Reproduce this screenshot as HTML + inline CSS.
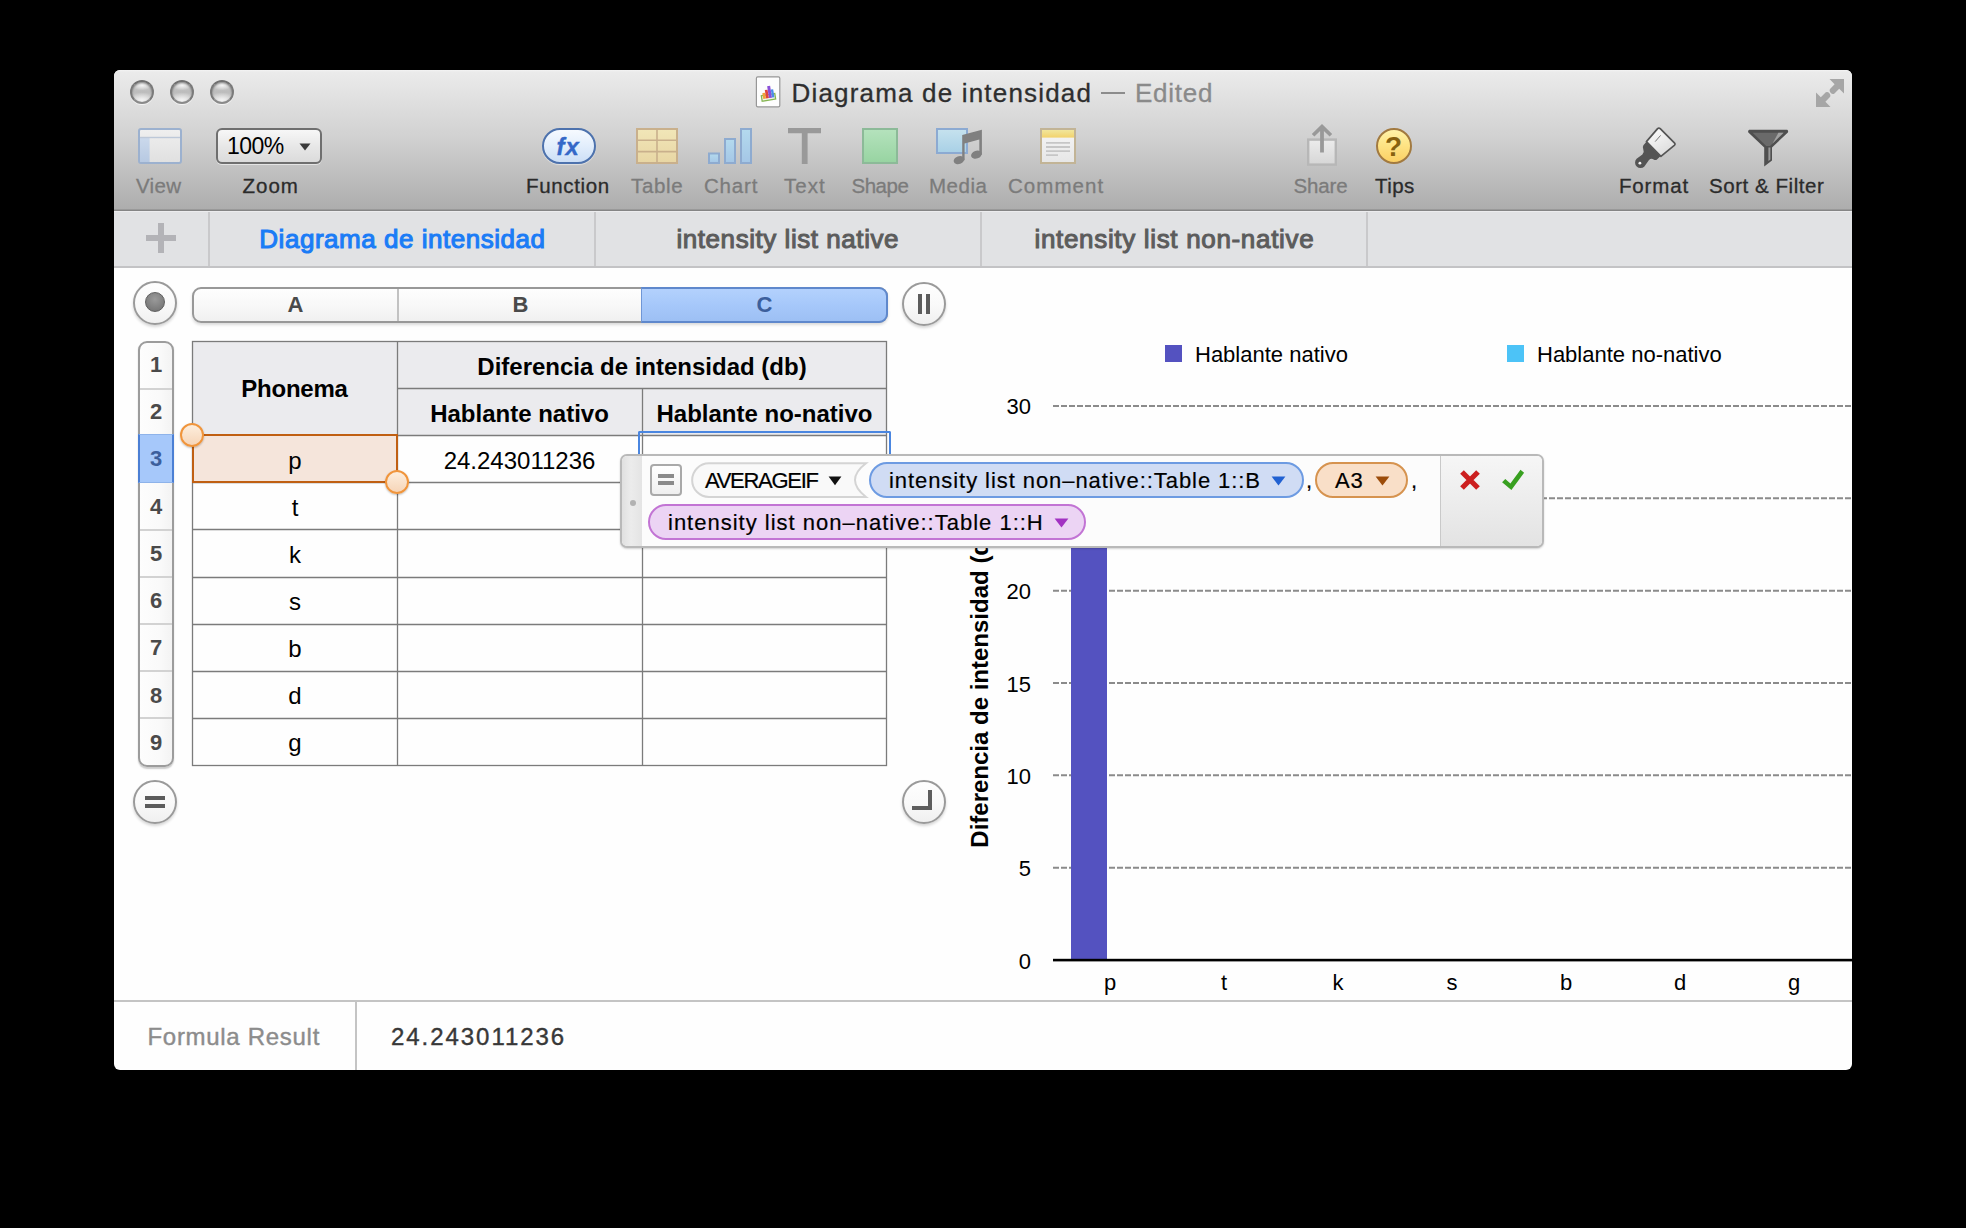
<!DOCTYPE html>
<html>
<head>
<meta charset="utf-8">
<title>Diagrama de intensidad</title>
<style>
*{box-sizing:border-box;margin:0;padding:0}
html,body{width:1966px;height:1228px;background:#000;overflow:hidden;font-family:"Liberation Sans",sans-serif}
body{font-family:"Liberation Sans",sans-serif;position:relative}
.win{position:absolute;left:114px;top:70px;width:1738px;height:1000px;border-radius:6px 6px 6px 6px;overflow:hidden;background:#fefefe}
.pg{position:absolute;left:-114px;top:-70px;width:1966px;height:1228px}
.a{position:absolute}
.t{position:absolute;white-space:nowrap;line-height:1}
.c{text-align:center}
/* toolbar */
.tb{left:114px;top:70px;width:1738px;height:141px;background:linear-gradient(#f4f4f4 0,#ebebeb 2px,#e3e3e3 22px,#d0d0d0 70px,#bcbcbc 110px,#adadad 139px,#858585 140px,#858585 141px)}
.tabs{left:114px;top:211px;width:1738px;height:57px;background:#e1e2e4;border-top:1px solid #ececee;border-bottom:2px solid #c3c3c5}
.tabsep{top:212px;width:2px;height:54px;background:#c9c9cb}
.tab{top:226px;font-size:26px;color:#5c5c5c;-webkit-text-stroke:1.05px #5c5c5c}
.lbl{top:176px;font-size:20.5px;color:#7b7b7b;letter-spacing:.3px;-webkit-text-stroke:.3px #7b7b7b}
.lbl.d{color:#2b2b2b;-webkit-text-stroke:.3px #2b2b2b}
.tl{width:24px;height:24px;border-radius:50%;background:radial-gradient(ellipse 62% 40% at 50% 92%,#f4f4f4 0,rgba(240,240,240,0) 100%),radial-gradient(ellipse 50% 26% at 50% 16%,#f6f6f6 0,rgba(246,246,246,0) 100%),linear-gradient(#cdcdcd,#bcbcbc 50%,#c9c9c9 75%,#dedede);border:2px solid #7a7a7a;border-top-color:#707070;border-bottom-color:#8a8a8a;box-shadow:0 1px 0.5px rgba(255,255,255,.7),inset 0 1px 2px rgba(0,0,0,.4)}
.cbtn{width:44px;height:44px;border-radius:50%;border:2px solid #9a9a9a;background:linear-gradient(#fefefe,#f9f9f9 55%,#f0f0f0);box-shadow:0 2px 3px rgba(0,0,0,.16)}
.colh{top:294px;font-size:22px;font-weight:bold;color:#4a4a4a}
.rowh{left:139px;width:34px;text-align:center;font-size:22px;font-weight:bold;color:#4a4a4a}
.rsep{left:0;width:32px;height:2px;background:#d2d2d2}
.th{font-size:24px;font-weight:bold;color:#000}
.td{font-size:24px;color:#000}
.hnd{width:24px;height:24px;border-radius:50%;border:2.4px solid #f0953c;background:linear-gradient(#fdeedd,#f6d5b8);box-shadow:0 1px 2px rgba(0,0,0,.25)}
.lg{top:344px;font-size:22px;color:#000}
.yl{left:980px;width:51px;text-align:right;font-size:22px;color:#000}
.xl{width:60px;text-align:center;top:972px;font-size:22px;color:#000}
.fm{font-size:22px;color:#000;letter-spacing:.8px;-webkit-text-stroke:.2px #000}
.botline{left:114px;top:1000px;width:1738px;height:2px;background:#c4c4c4}
</style>
</head>
<body>
<div class="win"><div class="pg">

<!-- TOOLBAR -->
<div class="a tb"></div>
<!-- traffic lights -->
<div class="a tl" style="left:130px;top:80px"></div>
<div class="a tl" style="left:170px;top:80px"></div>
<div class="a tl" style="left:210px;top:80px"></div>
<!-- title -->
<svg class="a" style="left:755px;top:76px" width="26" height="32" viewBox="0 0 26 32">
  <rect x="1.4" y="0.9" width="23.4" height="30" rx="1.4" fill="#fdfdfd" stroke="#979797" stroke-width="1.2"/>
  <g transform="rotate(-9 13 17)">
    <rect x="6" y="18.6" width="13.6" height="5.6" fill="#f1f4ea" stroke="#86b653" stroke-width="1.3"/>
    <rect x="7.4" y="16.2" width="2.8" height="6" fill="#f2a23a"/>
    <rect x="10.3" y="13.6" width="2.8" height="8.6" fill="#e0443e"/>
    <rect x="13.2" y="10.2" width="3" height="12" fill="#8a4fd8"/>
    <rect x="16.3" y="14" width="2.4" height="8.2" fill="#4a8ee8"/>
  </g>
</svg>
<div class="t" id="title" style="left:791.5px;top:80px;font-size:26px;color:#2e2e2e;letter-spacing:1.18px;-webkit-text-stroke:.3px #2e2e2e">Diagrama de intensidad</div>
<div class="a" style="left:1101px;top:92px;width:24px;height:2px;background:#8c8c8c"></div>
<div class="t" id="edited" style="left:1135px;top:80px;font-size:26px;color:#8a8a8a;letter-spacing:.75px;-webkit-text-stroke:.3px #8a8a8a">Edited</div>
<!-- fullscreen -->
<svg class="a" style="left:1815px;top:78px" width="30" height="30" viewBox="0 0 30 30">
  <g fill="#a6a6a6">
    <path d="M14.5 1 H29 V15.5 L24.2 10.7 L19.2 15.7 Q17.3 16.6 15.6 14.8 Q14 13 14.8 11.2 L19.6 6.2 Z"/>
    <path d="M15.5 29 H1 V14.5 L5.8 19.3 L10.8 14.3 Q12.7 13.4 14.4 15.2 Q16 17 15.2 18.8 L10.4 23.8 Z"/>
  </g>
</svg>
<!-- View -->
<svg class="a" style="left:137px;top:127px" width="46" height="38" viewBox="0 0 46 38">
  <defs><linearGradient id="vg" x1="0" y1="0" x2="0" y2="1"><stop offset="0" stop-color="#efefef"/><stop offset="1" stop-color="#e0e0e0"/></linearGradient>
  <linearGradient id="vs" x1="0" y1="0" x2="0" y2="1"><stop offset="0" stop-color="#cbd9ec"/><stop offset="1" stop-color="#b7c9e2"/></linearGradient></defs>
  <rect x="2" y="2" width="42" height="34" rx="2" fill="url(#vg)" stroke="#9cb1cf" stroke-width="2"/>
  <rect x="3" y="10.6" width="9.6" height="24.4" fill="url(#vs)"/>
  <rect x="3" y="9.8" width="40" height="1.4" fill="#bdc8d8"/>
</svg>
<div class="t lbl" id="l_view" style="left:136px">View</div>
<!-- Zoom -->
<div class="a" style="left:216px;top:128px;width:106px;height:36px;border:2px solid #6f6f6f;border-radius:6px;background:linear-gradient(#f7f7f7,#e6e6e6 55%,#dbdbdb);box-shadow:0 1px 0 rgba(255,255,255,.55)"></div>
<div class="t" id="zoomv" style="left:227px;top:135px;font-size:23px;color:#000;letter-spacing:-.55px">100%</div>
<svg class="a" style="left:299px;top:143px" width="12" height="8" viewBox="0 0 12 8"><path d="M0.5 0.5 H11.5 L6 7.5 Z" fill="#3a3a3a"/></svg>
<div class="t lbl d" id="l_zoom" style="left:242.5px;letter-spacing:1px">Zoom</div>
<!-- Function -->
<div class="a" style="left:542px;top:128px;width:54px;height:36px;border:2.4px solid #4d72ad;border-radius:18px;background:linear-gradient(#f6faff,#e2eefc 50%,#cddff6);box-shadow:0 1px 1px rgba(255,255,255,.5)"></div>
<div class="t" id="fx" style="left:556.5px;top:135px;font-size:24px;font-weight:bold;font-style:italic;color:#3468c8;letter-spacing:.9px;-webkit-text-stroke:.35px #3468c8">fx</div>
<div class="t lbl d" id="l_func" style="left:526px;letter-spacing:.65px">Function</div>
<!-- Table -->
<svg class="a" style="left:635px;top:127px" width="44" height="38" viewBox="0 0 44 38">
  <defs><linearGradient id="tg" x1="0" y1="0" x2="0" y2="1"><stop offset="0" stop-color="#f1e6b8"/><stop offset="1" stop-color="#e8d6a4"/></linearGradient></defs>
  <rect x="2" y="2" width="40" height="34" fill="url(#tg)" stroke="#c9b08c" stroke-width="2"/>
  <path d="M22 2 V36 M2 13.3 H42 M2 24.6 H42" stroke="#c9b08c" stroke-width="1.6" fill="none"/>
</svg>
<div class="t lbl" id="l_table" style="left:631px;letter-spacing:.65px">Table</div>
<!-- Chart -->
<svg class="a" style="left:707px;top:127px" width="46" height="38" viewBox="0 0 46 38">
  <defs><linearGradient id="cg" x1="0" y1="0" x2="0" y2="1"><stop offset="0" stop-color="#b4daee"/><stop offset="1" stop-color="#a4c6e6"/></linearGradient></defs>
  <rect x="2" y="26.5" width="10" height="9.5" fill="url(#cg)" stroke="#8eabd0" stroke-width="2"/>
  <rect x="18" y="12" width="10" height="24" fill="url(#cg)" stroke="#8eabd0" stroke-width="2"/>
  <rect x="34" y="2" width="10" height="34" fill="url(#cg)" stroke="#8eabd0" stroke-width="2"/>
</svg>
<div class="t lbl" id="l_chart" style="left:704px;letter-spacing:.8px">Chart</div>
<!-- Text -->
<svg class="a" style="left:786px;top:127px" width="38" height="38" viewBox="0 0 38 38"><path d="M2 1 H35 V6.2 H21.6 V37 H15.8 V6.2 H2 Z" fill="#999"/></svg>
<div class="t lbl" id="l_text" style="left:784px;letter-spacing:1px">Text</div>
<!-- Shape -->
<div class="a" style="left:862px;top:128px;width:36px;height:36px;border:2px solid #8cba98;background:linear-gradient(#b4e2bc,#98d4a2)"></div>
<div class="t lbl" id="l_shape" style="left:851.5px;letter-spacing:-.5px">Shape</div>
<!-- Media -->
<svg class="a" style="left:934px;top:126px" width="52" height="40" viewBox="0 0 52 40">
  <defs><linearGradient id="mg" x1="0" y1="0" x2="0" y2="1"><stop offset="0" stop-color="#c6e2ee"/><stop offset="1" stop-color="#a8d0e6"/></linearGradient></defs>
  <rect x="3" y="3" width="30" height="24" fill="url(#mg)" stroke="#8caad2" stroke-width="2"/>
  <g fill="#808080">
    <path d="M28.2 9 L47.9 3.8 V28.8 H45.3 V13.4 L30.6 17.4 V34.2 H28.2 Z"/>
    <ellipse cx="25" cy="34.1" rx="5.5" ry="3.9" transform="rotate(-20 25 34.1)"/>
    <ellipse cx="42.4" cy="28.7" rx="5.5" ry="3.9" transform="rotate(-20 42.4 28.7)"/>
  </g>
</svg>
<div class="t lbl" id="l_media" style="left:929px;letter-spacing:.5px">Media</div>
<!-- Comment -->
<svg class="a" style="left:1039px;top:127px" width="38" height="38" viewBox="0 0 38 38">
  <defs><linearGradient id="cmg" x1="0" y1="0" x2="0" y2="1"><stop offset="0" stop-color="#f6f6f6"/><stop offset="1" stop-color="#e6e6e6"/></linearGradient>
  <linearGradient id="cmy" x1="0" y1="0" x2="0" y2="1"><stop offset="0" stop-color="#f1e69c"/><stop offset="1" stop-color="#f2d26c"/></linearGradient></defs>
  <rect x="2" y="2" width="34" height="34" fill="url(#cmg)" stroke="#c2b496" stroke-width="2"/>
  <rect x="3" y="3" width="32" height="7.6" fill="url(#cmy)"/>
  <path d="M7 15.9 H31 M7 20 H31 M7 24.1 H31 M7 28.2 H19" stroke="#c6c6c6" stroke-width="1.8"/>
</svg>
<div class="t lbl" id="l_comment" style="left:1008px;letter-spacing:1.05px">Comment</div>
<!-- Share -->
<svg class="a" style="left:1305px;top:122px" width="34" height="46" viewBox="0 0 34 46">
  <defs><linearGradient id="sg" x1="0" y1="0" x2="0" y2="1"><stop offset="0" stop-color="#ececec"/><stop offset="1" stop-color="#d6d6d6"/></linearGradient></defs>
  <rect x="3.2" y="17.6" width="27.6" height="25" fill="url(#sg)" stroke="#b7b7b7" stroke-width="2.4"/>
  <path d="M17 2 L27.2 12 L24.6 14.6 L18.9 9 V30.6 H15.1 V9 L9.4 14.6 L6.8 12 Z" fill="#999"/>
</svg>
<div class="t lbl" id="l_share" style="left:1293.5px;letter-spacing:-.15px">Share</div>
<!-- Tips -->
<div class="a" style="left:1376px;top:128px;width:36px;height:36px;border-radius:50%;border:2.2px solid #a27a40;background:linear-gradient(#fff3a8,#fee486 45%,#fbd064)"></div>
<div class="t" id="tipq" style="left:1385px;top:133px;font-size:28px;font-weight:bold;color:#87610f">?</div>
<div class="t lbl d" id="l_tips" style="left:1375px;letter-spacing:.45px">Tips</div>
<!-- Format -->
<svg class="a" style="left:1630px;top:124px" width="50" height="48" viewBox="1630 124 50 48">
  <defs><linearGradient id="bg1" x1="0" y1="0" x2="0.6" y2="1"><stop offset="0" stop-color="#ffffff"/><stop offset="1" stop-color="#dcdcdc"/></linearGradient></defs>
  <path d="M1646.4 141.8 L1660.4 156.2 L1657 159.4 Q1655.6 160.6 1653.6 159.4 Q1651 158 1648.8 160.2 L1644.4 166.4 A5.4 5.4 0 1 1 1636.6 158.8 L1642.4 154.4 Q1644.6 152.4 1643.4 150 Q1642 147.2 1643.4 145.2 Z" fill="#545454"/>
  <path d="M1657.6 128.6 Q1658.9 127.4 1660.2 128.7 L1674.4 142.9 Q1675.6 144.2 1674.3 145.4 L1660.9 156.4 L1646.4 141.6 Z" fill="url(#bg1)" stroke="#555" stroke-width="1.7" stroke-linejoin="round"/>
  <path d="M1655.2 141.6 L1660.6 135.4" stroke="#777" stroke-width="1" fill="none"/>
  <circle cx="1639.9" cy="163.2" r="1.4" fill="#f2f2f2"/>
</svg>
<div class="t lbl d" id="l_format" style="left:1619px;letter-spacing:.85px">Format</div>
<!-- Sort & Filter -->
<svg class="a" style="left:1746px;top:127px" width="46" height="42" viewBox="1746 127 46 42">
  <path d="M1749.2 129.8 H1787.2 Q1788.9 131.2 1787.6 132.8 L1772 147.4 V160.4 L1764.2 166.4 V147.4 L1748.6 132.8 Q1747.3 131.2 1749.2 129.8 Z" fill="#4f4f4f"/>
  <path d="M1752.6 132.8 H1783.6 L1770 146 H1766.2 Z" fill="#6a6a6a"/>
  <path d="M1778.4 132.8 H1783.6 L1772.6 143.6 Z" fill="#a2a2a2"/>
  <path d="M1768.4 147.6 H1770.4 V159.6 L1768.4 161 Z" fill="#9a9a9a"/>
</svg>
<div class="t lbl d" id="l_sort" style="left:1709px;letter-spacing:.55px">Sort &amp; Filter</div>


<!-- TABS -->
<div class="a tabs"></div>
<div class="a" style="left:146px;top:235px;width:30px;height:6px;background:#b3b3b7"></div>
<div class="a" style="left:158px;top:223px;width:6px;height:30px;background:#b3b3b7"></div>
<div class="a tabsep" style="left:208px"></div>
<div class="a tabsep" style="left:594px"></div>
<div class="a tabsep" style="left:980px"></div>
<div class="a tabsep" style="left:1366px"></div>
<div class="t tab" id="tab1" style="left:259.3px;color:#1b7cf6;-webkit-text-stroke:1.1px #1b7cf6;letter-spacing:.53px">Diagrama de intensidad</div>
<div class="t tab" id="tab2" style="left:676.5px;letter-spacing:.55px">intensity list native</div>
<div class="t tab" id="tab3" style="left:1034.5px;letter-spacing:.67px">intensity list non-native</div>


<!-- SHEET -->
<!-- corner circle buttons -->
<div class="a cbtn" style="left:133px;top:281.3px"></div>
<div class="a" style="left:145px;top:292.3px;width:20px;height:20px;border-radius:50%;background:radial-gradient(circle at 50% 35%,#9a9a9a,#6e6e6e);border:1px solid #5f5f5f"></div>
<div class="a cbtn" style="left:902px;top:282px"></div>
<div class="a" style="left:918px;top:294px;width:4px;height:20px;background:#5c5c5c"></div>
<div class="a" style="left:926px;top:294px;width:4px;height:20px;background:#5c5c5c"></div>
<div class="a cbtn" style="left:133px;top:780px"></div>
<div class="a" style="left:145px;top:796px;width:20px;height:4px;background:#5c5c5c"></div>
<div class="a" style="left:145px;top:804px;width:20px;height:4px;background:#5c5c5c"></div>
<div class="a cbtn" style="left:902px;top:780px"></div>
<div class="a" style="left:912px;top:806px;width:20px;height:4px;background:#5e5e5e"></div>
<div class="a" style="left:928px;top:790px;width:4px;height:20px;background:#5e5e5e"></div>
<!-- column header bar -->
<div class="a" style="left:192px;top:287px;width:696px;height:36px;border:2px solid #989898;border-radius:9px;background:linear-gradient(#fefefe,#f8f8f8 50%,#f0f0f0);box-shadow:0 2px 3px rgba(0,0,0,.14);overflow:hidden">
  <div class="a" style="left:203px;top:0;width:1.5px;height:32px;background:#c2c2c2"></div>
</div>
<div class="a" style="left:640.6px;top:287px;width:247.4px;height:36px;background:linear-gradient(#b3d1fd,#a6c8fa 50%,#9dc0f4);border:2px solid #5f88cc;border-left:1px solid #6f96d6;border-radius:0 9px 9px 0"></div>
<div class="t colh" id="colA" style="left:287.5px">A</div>
<div class="t colh" id="colB" style="left:512.5px">B</div>
<div class="t colh" id="colC" style="left:756.5px;color:#3c5f9c">C</div>
<!-- row header bar -->
<div class="a" style="left:138px;top:341px;width:36px;height:426px;border:2px solid #9c9c9c;border-radius:9px;background:linear-gradient(90deg,#fdfdfd,#fafafa 60%,#f3f3f3);box-shadow:0 1.5px 1.5px rgba(0,0,0,.2);overflow:hidden">
  <div class="a rsep" style="top:44.5px"></div>
  <div class="a rsep" style="top:185.5px"></div>
  <div class="a rsep" style="top:233px"></div>
  <div class="a rsep" style="top:280px"></div>
  <div class="a rsep" style="top:327px"></div>
  <div class="a rsep" style="top:374px"></div>
</div>
<div class="a" style="left:138px;top:433.6px;width:36px;height:49.6px;background:#a6c8fa;border-left:2.6px solid #4b7fd4;border-right:2.6px solid #4b7fd4;border-top:1px solid #8eb3ea;border-bottom:1px solid #8eb3ea"></div>
<div class="t rowh" style="top:354px">1</div>
<div class="t rowh" style="top:401px">2</div>
<div class="t rowh" style="top:448px;color:#3c5f9c">3</div>
<div class="t rowh" style="top:496px">4</div>
<div class="t rowh" style="top:543px">5</div>
<div class="t rowh" style="top:590px">6</div>
<div class="t rowh" style="top:637px">7</div>
<div class="t rowh" style="top:685px">8</div>
<div class="t rowh" style="top:732px">9</div>
<!-- table -->
<div class="a" style="left:192px;top:341px;width:695px;height:95px;background:#ebebee"></div>
<svg class="a" style="left:190px;top:339px" width="700" height="430" viewBox="190 339 700 430">
  <g stroke="#7b7b7b" stroke-width="1.3" fill="none">
    <rect x="192.5" y="341.5" width="694" height="424"/>
    <path d="M397.5 341.5 V765.5 M642.5 388.5 V765.5"/>
    <path d="M397.5 388.5 H886.5 M192.5 435.5 H886.5 M192.5 482.5 H886.5 M192.5 529.5 H886.5 M192.5 577.5 H886.5 M192.5 624.5 H886.5 M192.5 671.5 H886.5 M192.5 718.5 H886.5"/>
  </g>
</svg>
<div class="t th c" id="h_ph" style="left:192.5px;width:204px;top:377px;letter-spacing:-.22px">Phonema</div>
<div class="t th c" id="h_dif" style="left:398px;width:488px;top:355px">Diferencia de intensidad (db)</div>
<div class="t th c" id="h_nat" style="left:398px;width:243px;top:402px">Hablante nativo</div>
<div class="t th c" id="h_non" style="left:643px;width:243px;top:402px">Hablante no-nativo</div>
<!-- selected A3 -->
<div class="a" style="left:192px;top:434.4px;width:206.2px;height:48.8px;background:#f5e5db;border:2.4px solid #c05f12"></div>
<!-- C3 blue selection -->
<div class="a" style="left:638px;top:430.6px;width:253.2px;height:30px;border:2px solid #4a86e0;border-bottom:none;border-radius:2px 2px 0 0"></div>
<div class="t td c" style="left:193px;width:204px;top:449.2px">p</div>
<div class="t td c" id="v_b3" style="left:398px;width:243px;top:449.2px">24.243011236</div>
<div class="t td c" style="left:193px;width:204px;top:496.2px">t</div>
<div class="t td c" style="left:193px;width:204px;top:543.2px">k</div>
<div class="t td c" style="left:193px;width:204px;top:590.2px">s</div>
<div class="t td c" style="left:193px;width:204px;top:637.2px">b</div>
<div class="t td c" style="left:193px;width:204px;top:684.2px">d</div>
<div class="t td c" style="left:193px;width:204px;top:731.2px">g</div>
<!-- handles -->
<div class="a hnd" style="left:180px;top:423px"></div>
<div class="a hnd" style="left:385px;top:470px"></div>


<!-- CHART -->
<div class="a" style="left:1165px;top:345px;width:17px;height:17px;background:#5452c0"></div>
<div class="t lg" id="lg1" style="left:1195px">Hablante nativo</div>
<div class="a" style="left:1507px;top:345px;width:17px;height:17px;background:#4cc3f7"></div>
<div class="t lg" id="lg2" style="left:1537px">Hablante no-nativo</div>
<svg class="a" style="left:1050px;top:400px" width="802" height="570" viewBox="1050 400 802 570">
  <g stroke="#8b8b8b" stroke-width="2" stroke-dasharray="6 2" fill="none">
    <path d="M1053 406 H1852 M1053 498.3 H1852 M1053 590.7 H1852 M1053 683 H1852 M1053 775.3 H1852 M1053 867.7 H1852"/>
  </g>
  <rect x="1071" y="512" width="36" height="448" fill="#5452c0"/>
  <rect x="1053" y="958.8" width="800" height="2.6" fill="#000"/>
</svg>
<div class="t yl" style="top:396px">30</div>
<div class="t yl" style="top:488px">25</div>
<div class="t yl" style="top:581px">20</div>
<div class="t yl" style="top:674px">15</div>
<div class="t yl" style="top:766px">10</div>
<div class="t yl" style="top:858px">5</div>
<div class="t yl" style="top:951px">0</div>
<div class="t xl" style="left:1080px">p</div>
<div class="t xl" style="left:1194px">t</div>
<div class="t xl" style="left:1308px">k</div>
<div class="t xl" style="left:1422px">s</div>
<div class="t xl" style="left:1536px">b</div>
<div class="t xl" style="left:1650px">d</div>
<div class="t xl" style="left:1764px">g</div>
<div class="t" id="ytitle" style="left:980px;top:683px;font-size:24px;font-weight:bold;color:#000;transform:translate(-50%,-50%) rotate(-90deg);transform-origin:50% 50%">Diferencia de intensidad (db)</div>


<!-- FORMULA POPUP -->
<div class="a" style="left:620px;top:454px;width:924px;height:93.6px;border:2px solid #b9b9b9;border-radius:7px;background:#fcfcfc;box-shadow:0 1px 2px rgba(0,0,0,.18);overflow:hidden">
  <div class="a" style="left:0;top:0;width:20px;height:90px;background:linear-gradient(90deg,#e0e0e0,#ececec 45%,#e4e4e4)"></div>
  <div class="a" style="left:7.5px;top:43.7px;width:6px;height:6px;border-radius:50%;background:#b2b2b2"></div>
  <div class="a" style="left:818px;top:0;width:102px;height:90px;background:linear-gradient(#f6f6f6,#e3e3e3);border-left:1.6px solid #c9c9c9"></div>
</div>
<!-- = button -->
<div class="a" style="left:650px;top:464px;width:32px;height:32px;border:2px solid #a9a9a9;border-radius:4px;background:linear-gradient(#ffffff,#efefef)"></div>
<div class="a" style="left:658px;top:473.8px;width:16px;height:4px;background:#8a8a8a"></div>
<div class="a" style="left:658px;top:481.4px;width:16px;height:4px;background:#8a8a8a"></div>
<!-- AVERAGEIF pill -->
<svg class="a" style="left:688px;top:460px" width="184" height="40" viewBox="688 460 184 40">
  <path d="M709 463.3 H866 Q844 480 866 497 H709 A16.8 16.8 0 0 1 709 463.3 Z" fill="#f9f9f9" stroke="#d4d4d4" stroke-width="2"/>
</svg>
<div class="t fm" id="f_avg" style="left:705px;top:470px;font-size:22px;letter-spacing:-1.3px">AVERAGEIF</div>
<svg class="a" style="left:828px;top:476px" width="14" height="10" viewBox="0 0 14 10"><path d="M0.6 0.4 H13.4 L7 9.2 Z" fill="#111"/></svg>
<!-- blue pill -->
<div class="a" style="left:869px;top:462px;width:435px;height:36px;border:2px solid #6d9be2;border-radius:18px;background:#d0dcf4"></div>
<div class="t fm" id="f_blue" style="left:889px;top:470px;letter-spacing:.93px">intensity list non–native::Table 1::B</div>
<svg class="a" style="left:1271px;top:476px" width="15" height="10" viewBox="0 0 15 10"><path d="M0.6 0.4 H14.4 L7.5 9.4 Z" fill="#2161d2"/></svg>
<div class="t fm" style="left:1306px;top:470px">,</div>
<!-- A3 pill -->
<div class="a" style="left:1315px;top:462px;width:93px;height:36px;border:2px solid #d6934f;border-radius:18px;background:#f9dfc8"></div>
<div class="t fm" id="f_a3" style="left:1335px;top:470px">A3</div>
<svg class="a" style="left:1375px;top:476px" width="15" height="10" viewBox="0 0 15 10"><path d="M0.6 0.4 H14.4 L7.5 9.4 Z" fill="#9c4c0a"/></svg>
<div class="t fm" style="left:1411px;top:470px">,</div>
<!-- pink pill -->
<div class="a" style="left:648px;top:504px;width:438px;height:36px;border:2px solid #c274d4;border-radius:18px;background:#ecd4f4"></div>
<div class="t fm" id="f_pink" style="left:668px;top:512px;letter-spacing:1px">intensity list non–native::Table 1::H</div>
<svg class="a" style="left:1054px;top:518px" width="15" height="10" viewBox="0 0 15 10"><path d="M0.6 0.4 H14.4 L7.5 9.4 Z" fill="#a232c2"/></svg>
<!-- cancel / accept -->
<svg class="a" style="left:1456px;top:466px" width="72" height="28" viewBox="1456 466 72 28">
  <path d="M1462 472 L1478 488 M1478 472 L1462 488" stroke="#cc1f1f" stroke-width="5.2" fill="none"/>
  <path d="M1502.1 482.3 L1505.3 479.1 L1510.4 483.6 L1520.5 469.8 L1524.1 472.7 L1511.4 490 Z" fill="#38a020"/>
</svg>


<!-- BOTTOM BAR -->
<div class="a botline"></div>
<div class="a" style="left:355px;top:1002px;width:2px;height:68px;background:#c4c4c4"></div>
<div class="t" id="fres" style="left:147.5px;top:1025px;font-size:24px;color:#8c8c8c;letter-spacing:.7px;-webkit-text-stroke:.4px #8c8c8c">Formula Result</div>
<div class="t" id="fval" style="left:391px;top:1025px;font-size:24px;color:#383838;letter-spacing:1.95px;-webkit-text-stroke:.4px #383838">24.243011236</div>


</div></div>
</body>
</html>
